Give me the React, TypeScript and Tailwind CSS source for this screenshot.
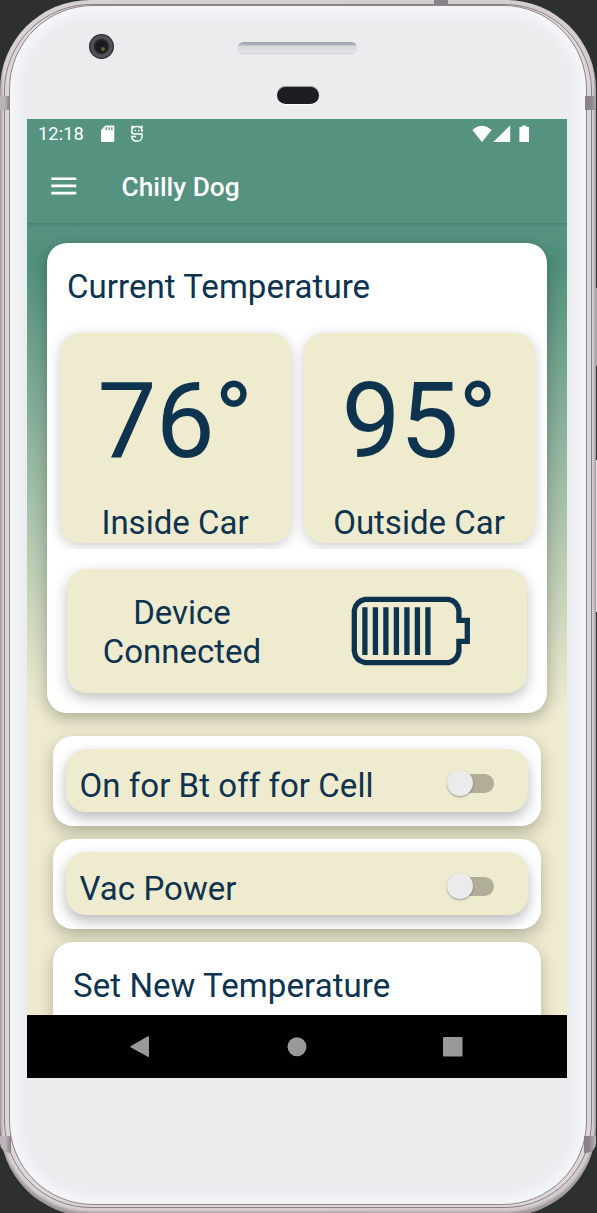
import React from "react";

function StatusBar() {
  return (
    <div className="flex h-8 shrink-0 items-start justify-between pt-[5px] pr-[37px] pl-[11px] text-white">
      <div className="flex items-start">
        <span className="w-[62px] text-[18.4px] leading-[20px]">12:18</span>
        <svg className="mt-px" width="15" height="18" viewBox="0 0 15 18">
          <path
            fillRule="evenodd"
            fill="#fff"
            d="M5.2 .5H13.2Q14.300 .5 14.300 1.500V16Q14.300 17 13.200 17H2Q1 17 1 16V5.200ZM5.600 2.200V5.200H6.900V2.200ZM8.400 2.200V5.200H9.700V2.200ZM11.200 2.200V5.200H12.500V2.200Z"
          />
        </svg>
        <svg className="mt-px ml-[15px]" width="14" height="18" viewBox="0 0 14 18" fill="none" stroke="#fff" strokeWidth="1.500">
          <path d="M12 5.500C11.500 .3 2.300 .3 1.800 5.500V6.500Q1.800 8.900 4 8.900H12V11.200C12 18 1.800 18 1.800 11.500H6" />
          <path d="M12 4.500V7" />
          <path fill="#fff" stroke="none" d="M1.200 .8H4L1.200 3.600ZM12.800 .8H10L12.800 3.600Z" />
          <path d="M4.500 5.600H6M8 5.600H9.500" />
        </svg>
      </div>
      <svg className="mt-px" width="58" height="18" viewBox="0 0 58 18" fill="#fff">
        <path d="M0.3 4.9Q9.900 -3.600 19.600 4.900L10 17Z" />
        <path d="M21.300 17L38.200 .3V17Z" />
        <path d="M47.400 2H50V.4H54.400V2H57V17H47.400Z" />
      </svg>
    </div>
  );
}

function AppBar() {
  return (
    <div className="relative flex h-[72px] shrink-0 items-center bg-[#559280] pl-[24px] shadow-[0_1px_3px_rgba(0,0,0,0.18)]">
      <div className="absolute inset-x-0 -top-1 h-1 bg-[#559280]" />
      <svg width="26" height="18" viewBox="0 0 26 18" className="-mt-[2px]" fill="#fff">
        <path d="M0.300 0.400H25.300V3H0.300ZM0.300 7.600H25.300V10.200H0.300ZM0.300 14.800H25.300V17.400H0.300Z" />
      </svg>
      <span className="ml-[44.500px] text-[26.250px] leading-[30px] font-medium text-white">Chilly Dog</span>
    </div>
  );
}

function Reading({ value, label }: { value: string; label: string }) {
  return (
    <div className="flex h-[210px] w-[231px] flex-col items-center rounded-[20px] bg-[#eeebcf] shadow-[0_3px_13px_rgba(0,0,0,0.2)]">
      <span className="mt-[27px] text-[105px] leading-[123px] tracking-[-0.8px]">{value}</span>
      <span className="mt-[21px] text-[33px] leading-[38px]">{label}</span>
    </div>
  );
}

function BatteryIcon() {
  return (
    <svg width="120" height="70" viewBox="0 0 120 70" fill="none" stroke="#0e334f" strokeWidth="5.3">
      <path d="M107.9 24.3V14.5Q106.500 5 97.500 3.300H14Q4.500 5.500 3.300 14.500V55.500Q4.500 64.500 14 66.700H97.500Q106.500 64.500 107.900 55.500V45.300H116.300V24.300H105.300M107.900 45.300H105.300" />
      <path d="M24.400 11.300V59M34.900 11.300V59M45.400 11.300V59M55.900 11.300V59M66.400 11.300V59M76.900 11.300V59M13.900 11.300V59" />
    </svg>
  );
}

function SwitchRow({ label }: { label: string }) {
  return (
    <div className="mx-[26px] mb-[13px] h-[90px] shrink-0 rounded-[20px] bg-white px-[13px] py-[13px] shadow-[0_6px_16px_rgba(0,0,0,0.25)]">
      <div className="flex h-[63px] items-center justify-between rounded-[20px] bg-[#eeebcf] pr-[34px] pl-[13.500px] shadow-[0_6px_14px_rgba(0,0,0,0.27)]">
        <span className="pt-[11px] text-[33px] leading-[38px] tracking-[0.050px]">{label}</span>
        <span className="mt-[5px] flex h-[19px] w-[47px] items-center rounded-full bg-[linear-gradient(90deg,transparent_8px,#b0ad98_8px)]">
          <span className="size-[26px] shrink-0 rounded-full bg-[#ebebeb] shadow-[0_1px_2px_rgba(0,0,0,0.35)]" />
        </span>
      </div>
    </div>
  );
}

function Screen() {
  return (
    <div className="-ml-[2px] flex h-[959px] w-[540px] flex-col overflow-hidden text-[#0e334f]">
      <div className="flex h-[896px] flex-col overflow-hidden bg-[linear-gradient(180deg,#559280_0px,#559280_118px,#50907c_142px,#eeebcf_590px)]">
        <StatusBar />
        <AppBar />
        <div className="mx-[20px] mt-[20px] mb-[23px] h-[470px] shrink-0 rounded-[20px] bg-white shadow-[0_5px_16px_rgba(0,0,0,0.28)]">
          <h1 className="ml-[20px] h-[76px] pt-[25px] text-[33px] leading-[38px] tracking-[0.050px]">Current Temperature</h1>
          <div className="flex h-[230px] justify-between overflow-hidden px-[12.500px] pt-[14px]">
            <Reading value="76°" label="Inside Car" />
            <Reading value="95°" label="Outside Car" />
          </div>
          <div className="mx-[20px] mt-[20px] flex h-[124px] items-center rounded-[20px] bg-[#eeebcf] shadow-[0_5px_14px_rgba(0,0,0,0.25)]">
            <div className="w-[230px] pt-[2px] text-center text-[33px] leading-[39px]">
              Device
              <br />
              Connected
            </div>
            <div className="ml-[54px]">
              <BatteryIcon />
            </div>
          </div>
        </div>
        <SwitchRow label="On for Bt off for Cell" />
        <SwitchRow label="Vac Power" />
        <div className="mx-[26px] h-[200px] shrink-0 rounded-[20px] bg-white pt-[25px] pl-[20px] text-[33px] leading-[38px] tracking-[0.080px] shadow-[0_6px_16px_rgba(0,0,0,0.25)]">
          Set New Temperature
        </div>
      </div>
      <div className="flex h-[63px] items-center bg-black pl-[103px]">
        <svg width="333" height="22" viewBox="0 0 333 22" fill="#999">
          <path d="M.5 10.300L17.800 .3Q19 0 19 1V20Q19 21.300 17.800 20.700L.5 11.300Q0 10.800 .5 10.300Z" />
          <circle cx="167" cy="10.700" r="9.500" />
          <rect x="313" y="1" width="19.500" height="19.500" rx="1" />
        </svg>
      </div>
    </div>
  );
}

export default function App() {
  return (
    <div className="relative h-[1213px] w-[597px] overflow-hidden bg-[#2d2f31] font-['Roboto','Liberation_Sans',sans-serif]">
      <div className="absolute top-[288px] right-0 h-[78px] w-1 bg-[#aaa7a8]" />
      <div className="absolute top-[460px] right-0 h-[152px] w-1 bg-[#e4e0e2]" />
      <div className="relative h-[1216px] w-[596px] rounded-[90px] bg-[linear-gradient(90deg,#a49ca0_0,#d8d1d4_3px,#d4cdd0_593px,#aaa2a5_596px)] p-[4px] shadow-[inset_0_-4px_3px_#9c9397]">
        <div className="h-[1204px] w-[588px] rounded-[87px] border border-[#898085] bg-[#ded7da] px-[4px] pb-[3px]">
          <div className="flex h-[1200px] flex-col items-center rounded-[84px] border border-[#8c868a] bg-[#ebecee] shadow-[inset_0_0_12px_8px_#f6f6f9]">
            <div className="flex h-[113px] w-full shrink-0 pl-[79px]">
              <div className="mt-[28px] flex size-[25px] items-center justify-center rounded-full bg-[radial-gradient(circle,#171a20_0_25%,#242528_38%,#515256_48%,#515256_60%,#202124_70%)]">
                <span className="mt-[4px] ml-[2px] size-[4px] rounded-full bg-[#65651d]" />
              </div>
              <div className="ml-[124px] flex w-[119px] flex-col items-center pt-[36px]">
                <div className="h-[11px] w-[119px] rounded-full bg-[linear-gradient(180deg,#9ba1ac_0,#b0b5bd_3px,#d6d8db_4px,#e2e3e5_10px)] shadow-[0_1px_1px_#cfd1d5]" />
                <div className="mt-[34px] h-[17px] w-[42px] rounded-full bg-[#1d1e21] shadow-[0_1px_1px_white,0_-1px_1px_#999]" />
              </div>
            </div>
            <Screen />
          </div>
        </div>
      </div>
      <div className="absolute top-[96px] left-0 h-[14px] w-[9px] bg-[linear-gradient(90deg,#b9b3b6_55%,#898287)]" />
      <div className="absolute top-[96px] left-[585px] h-[14px] w-[11px] bg-[linear-gradient(90deg,#898287_50%,#aaa3a7)]" />
      <div className="absolute top-0 left-[434px] h-[4px] w-[14px] bg-[#898388]" />
      <div className="absolute top-[1136px] left-0 h-[17px] w-[11px] rounded-bl-[10px] bg-[linear-gradient(90deg,#bdb5b9_50%,#898187)]" />
      <div className="absolute top-[1136px] left-[584px] h-[17px] w-[12px] rounded-br-[10px] bg-[linear-gradient(90deg,#898187_40%,#bdb5b9)]" />
    </div>
  );
}
